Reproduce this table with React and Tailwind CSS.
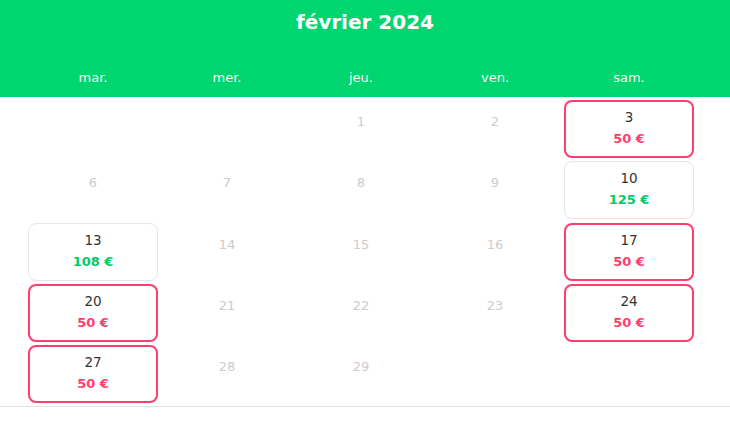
import React from 'react';

const days = ['mar.', 'mer.', 'jeu.', 'ven.', 'sam.'];

// kind: 'off' = grey number, 'full' = red outline, 'open' = grey outline
const cells = [
  null, null, { d: 1 }, { d: 2 }, { d: 3, kind: 'full', p: '50 €' },
  { d: 6 }, { d: 7 }, { d: 8 }, { d: 9 }, { d: 10, kind: 'open', p: '125 €' },
  { d: 13, kind: 'open', p: '108 €' }, { d: 14 }, { d: 15 }, { d: 16 }, { d: 17, kind: 'full', p: '50 €' },
  { d: 20, kind: 'full', p: '50 €' }, { d: 21 }, { d: 22 }, { d: 23 }, { d: 24, kind: 'full', p: '50 €' },
  { d: 27, kind: 'full', p: '50 €' }, { d: 28 }, { d: 29 }, null, null,
];

const Cell = ({ c }) => {
  if (!c) return <div />;
  if (!c.kind) {
    return (
      <div className="flex justify-center pt-[12px] text-[13px] leading-[20px] text-[#cccccc]">{c.d}</div>
    );
  }
  const full = c.kind === 'full';
  return (
    <div className="px-[2px]">
      <div
        className={
          full
            ? 'h-[58px] rounded-[8px] border-2 border-[#ff3d6e] flex flex-col items-center pt-[5px]'
            : 'h-[58px] rounded-[8px] border border-[#e6e6e6] flex flex-col items-center pt-[6px]'
        }
      >
        <span className="text-[13.5px] leading-[20px] text-[#333]">{c.d}</span>
        <span
          className={
            full
              ? 'mt-[2px] text-[13px] leading-[20px] font-bold text-[#ff3d6e]'
              : 'mt-[2px] text-[13px] leading-[20px] font-bold text-[#00cc66]'
          }
        >
          {c.p}
        </span>
      </div>
    </div>
  );
};

const App = () => {
  return (
    <div className="w-[730px] h-[430px] bg-white overflow-hidden" style={{ fontFamily: '"DejaVu Sans", sans-serif' }}>
      <div className="h-[97px] bg-[#00d66f] flex flex-col">
        <h1 className="pt-[9px] text-center text-[20px] leading-[26px] font-bold text-white">février 2024</h1>
        <div className="ml-[26px] w-[670px] grid grid-cols-5 mt-[34px]">
          {days.map((d) => (
            <div key={d} className="text-center text-[13px] leading-[18px] text-[#eafff3]">{d}</div>
          ))}
        </div>
      </div>
      <div className="border-b border-[#e2e2e2] pt-[3px]">
        <div className="ml-[26px] w-[670px] grid grid-cols-5 auto-rows-[61.25px]">
          {cells.map((c, i) => (
            <Cell key={i} c={c} />
          ))}
        </div>
      </div>
    </div>
  );
};

export default App;
